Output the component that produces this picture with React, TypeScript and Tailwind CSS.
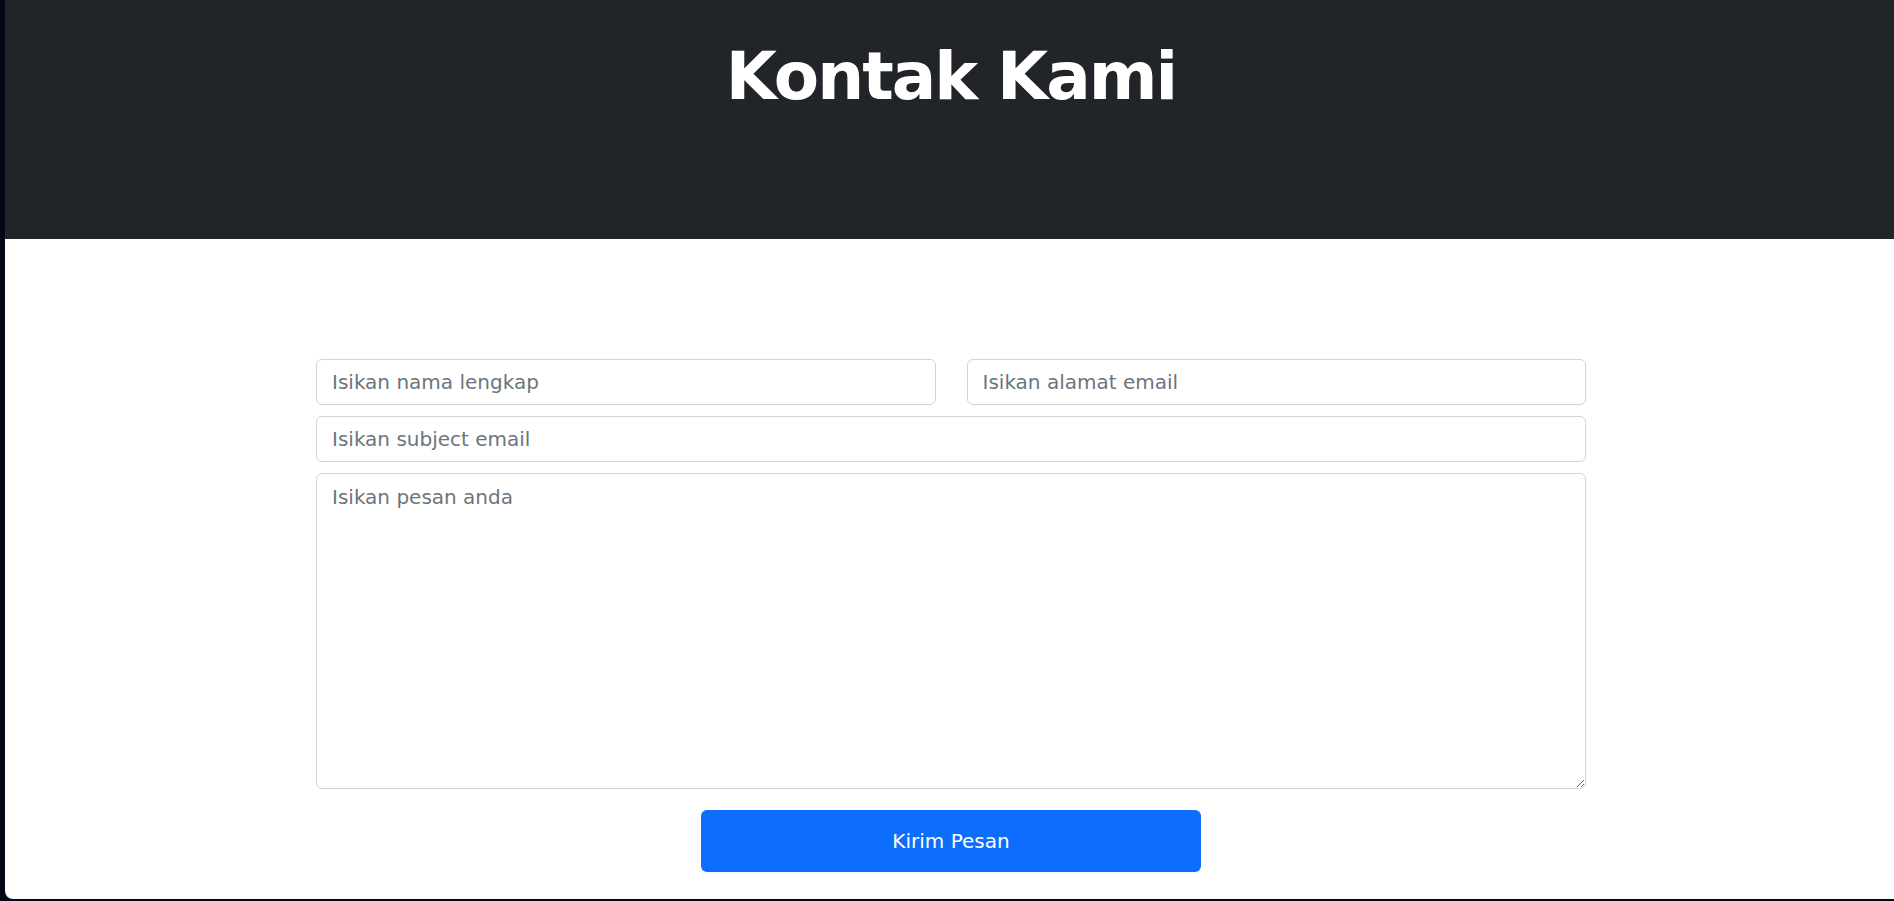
import React from "react";

const fieldClass =
  "w-full rounded-[6px] border border-[#ced4da] bg-white px-[15px] text-[20px] text-[#212529] placeholder:text-[#6c757d] outline-none";

const App = () => {
  return (
    <div className="flex h-screen w-full bg-[#020617] pb-[2px] pl-[5px] font-['DejaVu_Sans',sans-serif]">
      <div className="flex flex-1 flex-col overflow-hidden rounded-bl-lg bg-white">
        <header className="h-[239px] w-full bg-[#212529] pl-[3px] pt-[44px] text-center">
          <h1 className="text-[66px] font-bold leading-none tracking-[-2px] text-white">
            Kontak Kami
          </h1>
        </header>

        <section className="w-full pl-[3px] pt-[120px]">
          <form className="mx-auto flex w-[1270px] flex-col gap-[11px]">
            <div className="grid grid-cols-2 gap-[31px]">
              <input
                type="text"
                placeholder="Isikan nama lengkap"
                className={`${fieldClass} h-[46px]`}
              />
              <input
                type="email"
                placeholder="Isikan alamat email"
                className={`${fieldClass} h-[46px]`}
              />
            </div>
            <input
              type="text"
              placeholder="Isikan subject email"
              className={`${fieldClass} h-[46px]`}
            />
            <textarea
              placeholder="Isikan pesan anda"
              className={`${fieldClass} h-[316px] py-2 leading-[30px]`}
            />
            <button
              type="button"
              className="mx-auto mt-[10px] h-[62px] w-[500px] rounded-[6px] bg-[#0d6efd] text-[20px] text-white"
            >
              Kirim Pesan
            </button>
          </form>
        </section>
      </div>
    </div>
  );
};

export default App;
